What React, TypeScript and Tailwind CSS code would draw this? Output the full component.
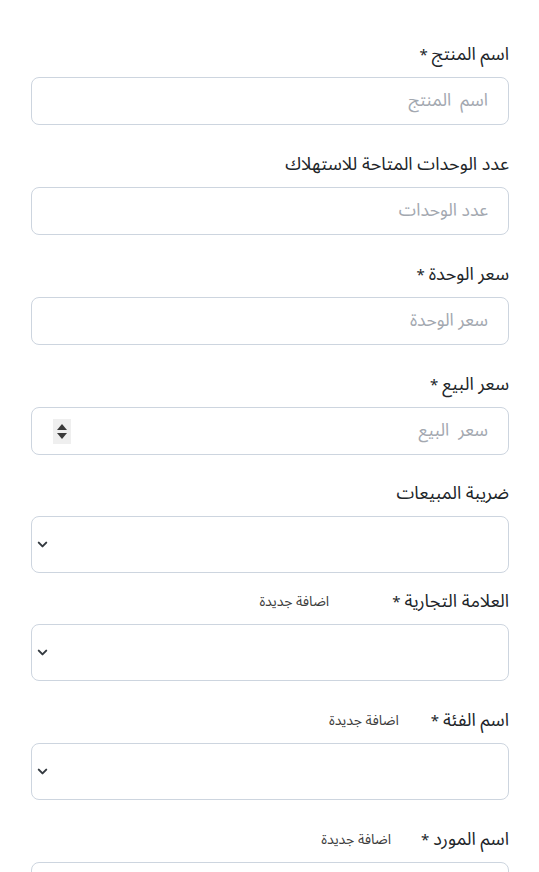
import { ChevronDown } from "lucide-react";

type Field = {
  label: string;
  required?: boolean;
  kind: "text" | "number" | "select";
  placeholder?: string;
  addNew?: boolean;
  gapClass?: string;
  topClass: string;
};

const FIELDS: Field[] = [
  { label: "اسم المنتج", required: true, kind: "text", placeholder: "اسم  المنتج", topClass: "mt-[41px]" },
  { label: "عدد الوحدات المتاحة للاستهلاك", kind: "text", placeholder: "عدد الوحدات", topClass: "mt-[26px]" },
  { label: "سعر الوحدة", required: true, kind: "text", placeholder: "سعر الوحدة", topClass: "mt-[26px]" },
  { label: "سعر البيع", required: true, kind: "number", placeholder: "سعر  البيع", topClass: "mt-[26px]" },
  { label: "ضريبة المبيعات", kind: "select", topClass: "mt-[25px]" },
  { label: "العلامة التجارية", required: true, kind: "select", addNew: true, gapClass: "mr-[63px]", topClass: "mt-[15px]" },
  { label: "اسم الفئة", required: true, kind: "select", addNew: true, gapClass: "mr-[32px]", topClass: "mt-[26px]" },
  { label: "اسم المورد", required: true, kind: "select", addNew: true, gapClass: "mr-[30px]", topClass: "mt-[26px]" },
];

function Spinner() {
  return (
    <div className="flex h-[25px] w-[18px] flex-col items-center justify-center gap-[3px] bg-[#efefef]">
      <svg width="10" height="6" viewBox="0 0 10 6">
        <path d="M5 0 L10 6 L0 6 Z" fill="#3a3a3a" />
      </svg>
      <svg width="10" height="6" viewBox="0 0 10 6">
        <path d="M0 0 L10 0 L5 6 Z" fill="#3a3a3a" />
      </svg>
    </div>
  );
}

function FormRow({ f }: { f: Field }) {
  return (
    <div className={f.topClass}>
      <div className="flex h-[26px] items-center pt-[1px]">
        <label className="text-[18px] text-[#212529]">
          {f.label}
          {f.required && <span className="mr-1 text-[15px]">*</span>}
        </label>
        {f.addNew && (
          <a className={`text-[14px] text-[#3d3d3d] ${f.gapClass}`}>اضافة جديدة</a>
        )}
      </div>
      <div className="mt-[10px]">
        {f.kind === "select" ? (
          <div className="flex h-[57px] items-center justify-end rounded-lg border border-[#cdd5df] bg-white pl-[3px]">
            <ChevronDown size={15} strokeWidth={3.2} className="text-[#343a40]" />
          </div>
        ) : (
          <div className="flex h-[48px] items-center rounded-lg border border-[#cdd5df] bg-white pr-[20px] pl-[21px]">
            <input
              type="text"
              placeholder={f.placeholder}
              className="min-w-0 flex-1 bg-transparent text-[17.5px] outline-none placeholder:text-[#a3a8b0]"
            />
            {f.kind === "number" && <Spinner />}
          </div>
        )}
      </div>
    </div>
  );
}

export default function App() {
  return (
    <div
      dir="rtl"
      className="min-h-screen bg-white pr-[30px] pl-[31px]"
      style={{ fontFamily: '"Noto Sans Arabic", "Noto Sans", "DejaVu Sans", sans-serif' }}
    >
      {FIELDS.map((f) => (
        <FormRow key={f.label} f={f} />
      ))}
    </div>
  );
}
